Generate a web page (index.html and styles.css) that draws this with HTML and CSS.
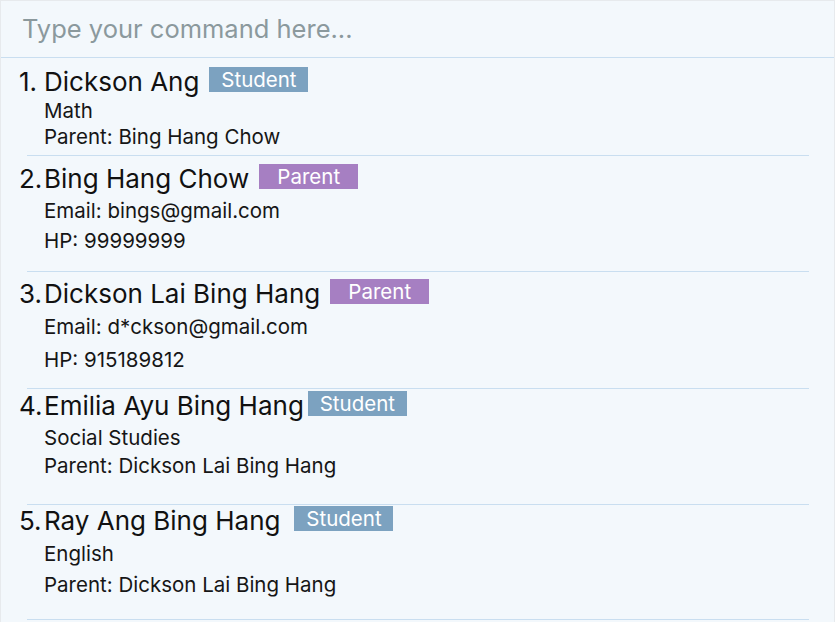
FILE: index.html
```html
<!DOCTYPE html>
<html>
<head>
<meta charset="utf-8">
<link rel="stylesheet" href="styles.css">
</head>
<body>
<div class="app">
  <div class="command">Type your command here...</div>
  <div class="list">
    <div class="card">
      <div class="head"><span class="num">1.</span><span class="name">Dickson Ang</span><span class="tag student">Student</span></div>
      <div class="line d1">Math</div>
      <div class="line d2">Parent: Bing Hang Chow</div>
    </div>
    <div class="card">
      <div class="head"><span class="num">2.</span><span class="name">Bing Hang Chow</span><span class="tag parent">Parent</span></div>
      <div class="line d1">Email: bings@gmail.com</div>
      <div class="line d2">HP: 99999999</div>
    </div>
    <div class="card">
      <div class="head"><span class="num">3.</span><span class="name">Dickson Lai Bing Hang</span><span class="tag parent">Parent</span></div>
      <div class="line d1">Email: d*ckson@gmail.com</div>
      <div class="line d2">HP: 915189812</div>
    </div>
    <div class="card">
      <div class="head"><span class="num">4.</span><span class="name">Emilia Ayu Bing Hang</span><span class="tag student">Student</span></div>
      <div class="line d1">Social Studies</div>
      <div class="line d2">Parent: Dickson Lai Bing Hang</div>
    </div>
    <div class="card">
      <div class="head"><span class="num">5.</span><span class="name">Ray Ang Bing Hang</span><span class="tag student">Student</span></div>
      <div class="line d1">English</div>
      <div class="line d2">Parent: Dickson Lai Bing Hang</div>
    </div>
  </div>
</div>
</body>
</html>
```
FILE: styles.css
```css
html, body {
  margin: 0;
  padding: 0;
  background: #f3f8fc;
}
body {
  font-family: Inter, "Noto Sans", sans-serif;
  color: #141414;
}
.app {
  width: 835px;
  height: 622px;
  box-sizing: border-box;
  border-top: 1px solid #e7eaed;
  border-left: 1px solid #e7eaed;
  border-right: 1px solid #e7eaed;
  overflow: hidden;
}
.command {
  height: 57px;
  box-sizing: border-box;
  padding: 12px 0 0 21px;
  font-size: 25.5px;
  line-height: 32px;
  color: #8b999d;
  border-bottom: 1px solid #c9def0;
}
.card {
  display: flex;
  flex-direction: column;
  padding-left: 18px;
}
.card::after {
  content: "";
  display: block;
  height: 1px;
  background: #c9def0;
  margin: 0 25px 0 8px;
}
.head {
  display: flex;
  align-items: center;
  height: 26px;
  font-size: 26px;
  color: #111;
}
.num {
  width: 25px;
  flex: none;
}
.tag {
  width: 99px;
  height: 25px;
  margin-left: 10px;
  margin-top: -3px;
  color: #fff;
  font-size: 20.5px;
  line-height: 25px;
  text-align: center;
}
.student { background: #7ca2c0; }
.parent { background: #a67fc2; }
.line {
  padding-left: 25px;
  height: 26px;
  line-height: 27px;
  font-size: 20.5px;
  color: #161616;
}
.card:nth-child(1) { padding-top: 10px; }
.card:nth-child(1) .d1 { margin-top: 3px; }
.card:nth-child(1) .d2 { margin-top: 0; margin-bottom: 6px; }
.card:nth-child(2) { padding-top: 9px; }
.card:nth-child(2) .d1 { margin-top: 6px; }
.card:nth-child(2) .d2 { margin-top: 4px; margin-bottom: 18px; }
.card:nth-child(3) { padding-top: 8px; }
.card:nth-child(3) .d1 { margin-top: 7px; }
.card:nth-child(3) .d2 { margin-top: 7px; margin-bottom: 16px; }
.card:nth-child(4) { padding-top: 3px; }
.card:nth-child(4) .d1 { margin-top: 6px; }
.card:nth-child(4) .d2 { margin-top: 2px; margin-bottom: 26px; }
.card:nth-child(4) .tag { margin-left: 4px; }
.card:nth-child(5) { padding-top: 2px; }
.card:nth-child(5) .d1 { margin-top: 7px; }
.card:nth-child(5) .d2 { margin-top: 5px; margin-bottom: 22px; }
.card:nth-child(5) .tag { margin-left: 14px; }
```
